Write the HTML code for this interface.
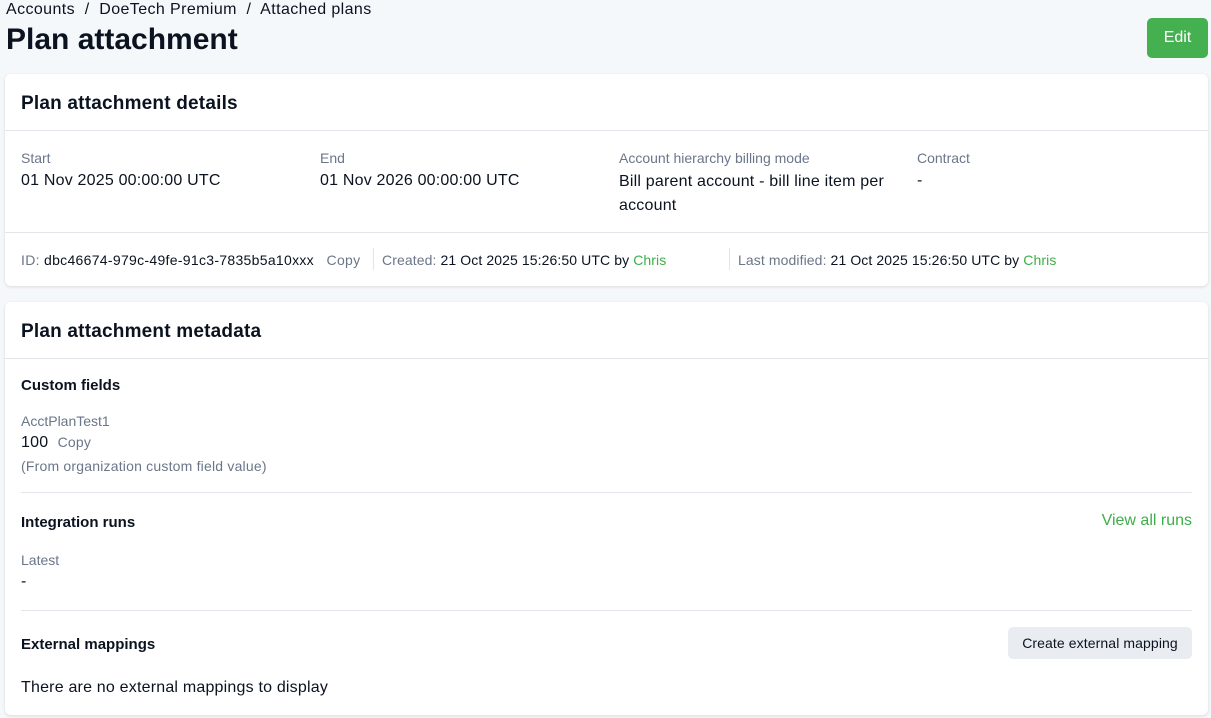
<!DOCTYPE html>
<html><head><style>
*{margin:0;padding:0;box-sizing:border-box}
body{width:1211px;height:718px;background:#f5f8fb;font-family:"Liberation Sans",sans-serif;color:#0b1220;position:relative;overflow:hidden}
.a{position:absolute;white-space:nowrap}
.card{position:absolute;left:5px;width:1203px;background:#fff;border-radius:6px;box-shadow:0 1px 3px rgba(0,0,0,.12)}
.lbl{color:#6b7689;font-size:14px}
.v{font-size:16px;color:#0b1220;letter-spacing:.2px}
.g{color:#3fae4a}
.hr{position:absolute;height:1px;background:#e2e6eb}
.s{font-size:14px;letter-spacing:.1px}
</style></head><body>
<div class="a" style="left:6px;top:1px;font-size:16px;letter-spacing:.4px">Accounts &nbsp;/&nbsp; DoeTech Premium &nbsp;/&nbsp; Attached plans</div>
<div class="a" style="left:6px;top:23px;font-size:30px;font-weight:bold">Plan attachment</div>
<div class="a" style="left:1147px;top:18px;width:61px;height:40px;background:#45b04f;border-radius:5px;color:#fff;font-size:16px;text-align:center;line-height:40px">Edit</div>

<div class="card" style="top:74px;height:212px">
<div class="a" style="left:16px;top:19px;font-size:19px;font-weight:bold;letter-spacing:.2px">Plan attachment details</div>
<div class="hr" style="left:0;right:0;top:56px"></div>
<div class="a lbl" style="left:16px;top:76px">Start</div>
<div class="a v" style="left:16px;top:98px">01 Nov 2025 00:00:00 UTC</div>
<div class="a lbl" style="left:315px;top:76px">End</div>
<div class="a v" style="left:315px;top:98px">01 Nov 2026 00:00:00 UTC</div>
<div class="a lbl" style="left:614px;top:76px">Account hierarchy billing mode</div>
<div class="a v" style="left:614px;top:96px;line-height:24px">Bill parent account - bill line item per<br>account</div>
<div class="a lbl" style="left:912px;top:76px">Contract</div>
<div class="a v" style="left:912px;top:98px">-</div>
<div class="hr" style="left:0;right:0;top:158px"></div>
<div class="a s" style="left:16px;top:178px;letter-spacing:.3px"><span class="lbl">ID:</span> dbc46674-979c-49fe-91c3-7835b5a10xxx &nbsp;&nbsp;<span class="lbl">Copy</span></div>
<div class="a" style="left:368px;top:174px;width:1px;height:22px;background:#e2e6eb"></div>
<div class="a s" style="left:377px;top:178px"><span class="lbl">Created:</span> 21 Oct 2025 15:26:50 UTC by <span class="g">Chris</span></div>
<div class="a" style="left:724px;top:174px;width:1px;height:22px;background:#e2e6eb"></div>
<div class="a s" style="left:733px;top:178px"><span class="lbl">Last modified:</span> 21 Oct 2025 15:26:50 UTC by <span class="g">Chris</span></div>
</div>

<div class="card" style="top:302px;height:413px">
<div class="a" style="left:16px;top:19px;font-size:19px;font-weight:bold;letter-spacing:.2px">Plan attachment metadata</div>
<div class="hr" style="left:0;right:0;top:56px"></div>
<div class="a" style="left:16px;top:75px;font-size:15px;font-weight:bold">Custom fields</div>
<div class="a lbl" style="left:16px;top:111px">AcctPlanTest1</div>
<div class="a v" style="left:16px;top:132px">100 &nbsp;<span class="lbl">Copy</span></div>
<div class="a lbl" style="left:16px;top:156px;letter-spacing:.2px">(From organization custom field value)</div>
<div class="hr" style="left:16px;right:16px;top:190px"></div>
<div class="a" style="left:16px;top:212px;font-size:15px;font-weight:bold">Integration runs</div>
<div class="a g" style="right:16px;top:210px;font-size:16px">View all runs</div>
<div class="a lbl" style="left:16px;top:250px">Latest</div>
<div class="a v" style="left:16px;top:271px">-</div>
<div class="hr" style="left:16px;right:16px;top:308px"></div>
<div class="a" style="left:16px;top:334px;font-size:15px;font-weight:bold">External mappings</div>
<div class="a s" style="right:16px;top:325px;width:184px;height:32px;background:#e9edf1;border-radius:5px;text-align:center;line-height:32px">Create external mapping</div>
<div class="a v" style="left:16px;top:377px">There are no external mappings to display</div>
</div>
</body></html>
